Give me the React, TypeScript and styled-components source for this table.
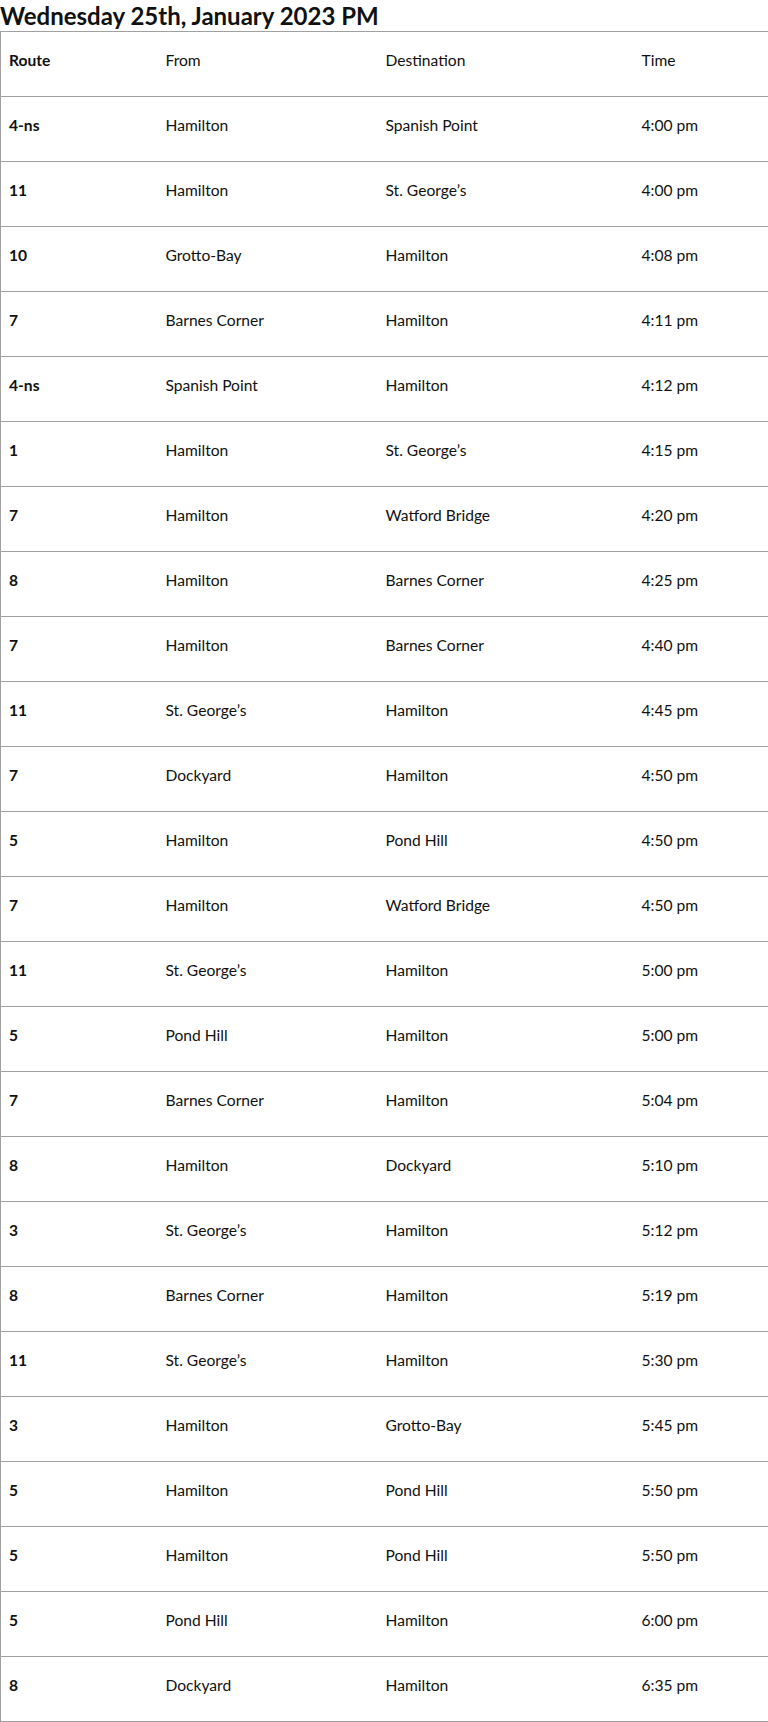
import React from "react";
import styled, { createGlobalStyle } from "styled-components";

const GlobalStyle = createGlobalStyle`
	body {
		margin: 0;
		background: #fff;
		font-family: Lato, "Noto Sans", sans-serif;
		color: #111;
	}
`;

const Title = styled.h3`
	margin: 0;
	font-size: 24px;
	line-height: 31px;
	font-weight: 700;
	color: #111;
	white-space: nowrap;
`;

const Table = styled.table`
	width: 768px;
	border-collapse: collapse;
	table-layout: fixed;
	border: 1px solid #a0a0a0;
`;

const Row = styled.tr`
	height: 65px;
	border-top: 1px solid #a0a0a0;
	border-bottom: 1px solid #a0a0a0;
`;

const Cell = styled.td<{ $strong?: boolean }>`
	padding: 0 8px 8px;
	vertical-align: middle;
	font-size: 15.6px;
	line-height: 22px;
	font-weight: ${(p) => (p.$strong ? 700 : 400)};
	text-align: left;
	white-space: nowrap;
`;

type Trip = [string, string, string, string];

const trips: Trip[] = [
	["4-ns", "Hamilton", "Spanish Point", "4:00 pm"],
	["11", "Hamilton", "St. George’s", "4:00 pm"],
	["10", "Grotto-Bay", "Hamilton", "4:08 pm"],
	["7", "Barnes Corner", "Hamilton", "4:11 pm"],
	["4-ns", "Spanish Point", "Hamilton", "4:12 pm"],
	["1", "Hamilton", "St. George’s", "4:15 pm"],
	["7", "Hamilton", "Watford Bridge", "4:20 pm"],
	["8", "Hamilton", "Barnes Corner", "4:25 pm"],
	["7", "Hamilton", "Barnes Corner", "4:40 pm"],
	["11", "St. George’s", "Hamilton", "4:45 pm"],
	["7", "Dockyard", "Hamilton", "4:50 pm"],
	["5", "Hamilton", "Pond Hill", "4:50 pm"],
	["7", "Hamilton", "Watford Bridge", "4:50 pm"],
	["11", "St. George’s", "Hamilton", "5:00 pm"],
	["5", "Pond Hill", "Hamilton", "5:00 pm"],
	["7", "Barnes Corner", "Hamilton", "5:04 pm"],
	["8", "Hamilton", "Dockyard", "5:10 pm"],
	["3", "St. George’s", "Hamilton", "5:12 pm"],
	["8", "Barnes Corner", "Hamilton", "5:19 pm"],
	["11", "St. George’s", "Hamilton", "5:30 pm"],
	["3", "Hamilton", "Grotto-Bay", "5:45 pm"],
	["5", "Hamilton", "Pond Hill", "5:50 pm"],
	["5", "Hamilton", "Pond Hill", "5:50 pm"],
	["5", "Pond Hill", "Hamilton", "6:00 pm"],
	["8", "Dockyard", "Hamilton", "6:35 pm"],
];

export default function App() {
	return (
		<>
			<GlobalStyle />
			<Title>Wednesday 25th, January 2023 PM</Title>
			<Table>
				<colgroup>
					<col style={{ width: 157 }} />
					<col style={{ width: 220 }} />
					<col style={{ width: 256 }} />
					<col style={{ width: 135 }} />
				</colgroup>
				<tbody>
					<Row>
						<Cell $strong>Route</Cell>
						<Cell>From</Cell>
						<Cell>Destination</Cell>
						<Cell>Time</Cell>
					</Row>
					{trips.map((t, i) => (
						<Row key={i}>
							<Cell $strong>{t[0]}</Cell>
							<Cell>{t[1]}</Cell>
							<Cell>{t[2]}</Cell>
							<Cell>{t[3]}</Cell>
						</Row>
					))}
				</tbody>
			</Table>
		</>
	);
}
